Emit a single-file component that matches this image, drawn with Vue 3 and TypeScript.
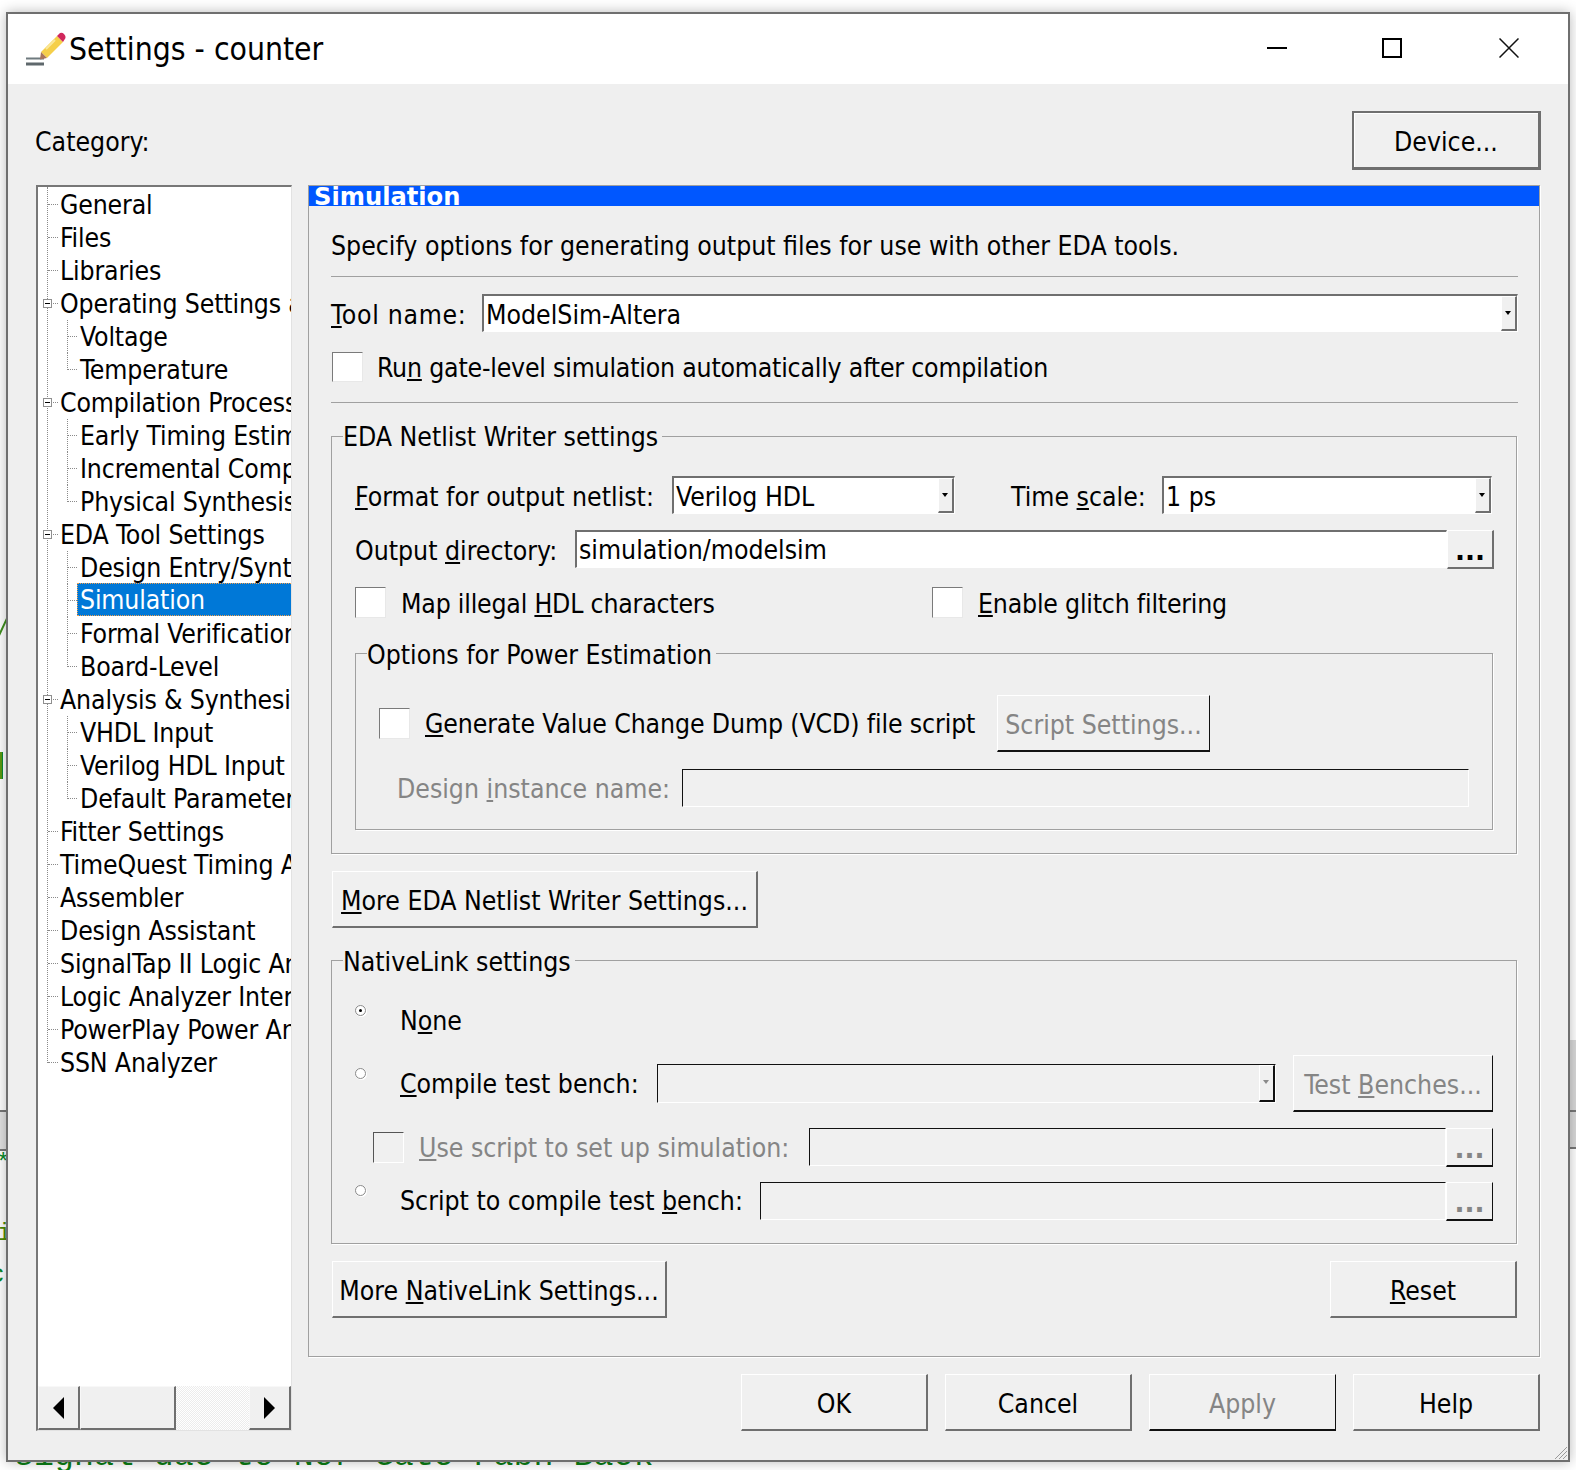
<script setup lang="ts">
interface TreeRow { label: string; level: number; expander?: boolean; last?: boolean; selected?: boolean }
const rows: TreeRow[] = [
  { label: 'General', level: 0 },
  { label: 'Files', level: 0 },
  { label: 'Libraries', level: 0 },
  { label: 'Operating Settings and Conditions', level: 0, expander: true },
  { label: 'Voltage', level: 1 },
  { label: 'Temperature', level: 1, last: true },
  { label: 'Compilation Process Settings', level: 0, expander: true },
  { label: 'Early Timing Estimate', level: 1 },
  { label: 'Incremental Compilation', level: 1 },
  { label: 'Physical Synthesis Optimizations', level: 1, last: true },
  { label: 'EDA Tool Settings', level: 0, expander: true },
  { label: 'Design Entry/Synthesis', level: 1 },
  { label: 'Simulation', level: 1, selected: true },
  { label: 'Formal Verification', level: 1 },
  { label: 'Board-Level', level: 1, last: true },
  { label: 'Analysis & Synthesis Settings', level: 0, expander: true },
  { label: 'VHDL Input', level: 1 },
  { label: 'Verilog HDL Input', level: 1 },
  { label: 'Default Parameters', level: 1, last: true },
  { label: 'Fitter Settings', level: 0 },
  { label: 'TimeQuest Timing Analyzer', level: 0 },
  { label: 'Assembler', level: 0 },
  { label: 'Design Assistant', level: 0 },
  { label: 'SignalTap II Logic Analyzer', level: 0 },
  { label: 'Logic Analyzer Interface', level: 0 },
  { label: 'PowerPlay Power Analyzer Settings', level: 0 },
  { label: 'SSN Analyzer', level: 0 },
]
const footer = [
  { label: 'OK', disabled: false },
  { label: 'Cancel', disabled: false },
  { label: 'Apply', disabled: true },
  { label: 'Help', disabled: false },
]
</script>

<template>
  <div class="desk">
    <span class="bd bd-band-l"></span>
    <span class="bd bd-band-r"></span>
    <span class="bd bd-slash"></span>
    <span class="bd bd-green"></span>
    <span class="bd bd-star">*</span>
    <span class="bd bd-i">i</span>
    <span class="bd bd-c">c</span>
    <span class="bd bd-code">signal dac to Nor Gate Fabn Back</span>

    <div class="window">
      <header class="titlebar">
        <svg class="appicon" width="40" height="36" viewBox="0 0 40 36">
          <rect x="0" y="25.5" width="18" height="2" fill="#6f7a7e" />
          <rect x="0" y="30.5" width="18" height="3" fill="#5f686c" />
          <path d="M15 20 L31 4 L37 10 L21 26 Z" fill="#f5cf4a" />
          <path d="M31 4 L34 1 Q36 0 38 2 Q40 4 39.5 6 L37 10 Z" fill="#d0275c" />
          <path d="M15 20 L21 26 L14 27.5 Z" fill="#a9745a" />
          <path d="M20 17 L29 8" stroke="#fbe89a" stroke-width="2" />
        </svg>
        <span class="title">Settings - counter</span>
        <span class="grow"></span>
        <svg class="wbtn w-min" width="20" height="20" viewBox="0 0 20 20"><rect x="0" y="9" width="20" height="2" fill="#000" /></svg>
        <svg class="wbtn w-max" width="20" height="20" viewBox="0 0 20 20"><rect x="1" y="1" width="18" height="18" fill="none" stroke="#000" stroke-width="2" /></svg>
        <svg class="wbtn w-close" width="20" height="20" viewBox="0 0 20 20"><path d="M0.5 0.5 L19.5 19.5 M19.5 0.5 L0.5 19.5" stroke="#111" stroke-width="1.5" /></svg>
      </header>

      <div class="body">
        <div class="toprow">
          <span>Category:</span>
          <button class="btn device">Device...</button>
        </div>

        <div class="main">
          <div class="tree">
            <div class="list">
              <span class="rootline"></span>
              <div
                v-for="r in rows"
                :key="r.label"
                class="trow"
                :class="[r.level ? 'child' : 'root', { last: r.last, sel: r.selected }]"
              >
                <span class="hline"></span>
                <span v-if="r.level" class="vline"></span>
                <span v-if="r.expander" class="exp"><i></i></span>
                <span class="tlabel">{{ r.label }}</span>
              </div>
            </div>
            <div class="hscroll">
              <div class="sb-btn"><svg width="12" height="22" viewBox="0 0 12 22"><path d="M11 0 V22 L0 11 Z" fill="#000" /></svg></div>
              <div class="sb-thumb"></div>
              <div class="sb-track"></div>
              <div class="sb-btn"><svg width="12" height="22" viewBox="0 0 12 22"><path d="M0 0 V22 L11 11 Z" fill="#000" /></svg></div>
            </div>
          </div>

          <div class="rightcol">
            <section class="panel">
              <div class="phead">Simulation</div>
              <div class="pbody">
                <div class="desc">Specify options for generating output files for use with other EDA tools.</div>
                <div class="divider d1"></div>
                <div class="row tool">
                  <label class="l-tool"><u>T</u>ool name:</label>
                  <div class="combo fill"><span>ModelSim-Altera</span><b class="arrow"><i></i></b></div>
                </div>
                <div class="row run">
                  <span class="check"></span>
                  <label class="cl l-run">Ru<u>n</u> gate-level simulation automatically after compilation</label>
                </div>
                <div class="divider d2"></div>

                <div class="group g-eda">
                  <span class="legend">EDA Netlist Writer settings</span>
                  <div class="row fmt">
                    <label class="l-fmt"><u>F</u>ormat for output netlist:</label>
                    <div class="combo c-fmt"><span>Verilog HDL</span><b class="arrow"><i></i></b></div>
                    <label class="l-time">Time <u>s</u>cale:</label>
                    <div class="combo c-time"><span>1 ps</span><b class="arrow"><i></i></b></div>
                  </div>
                  <div class="row out">
                    <label class="l-out">Output <u>d</u>irectory:</label>
                    <div class="input i-out"><span>simulation/modelsim</span></div>
                    <button class="btn dots"><span>...</span></button>
                  </div>
                  <div class="row opts">
                    <div class="opt1"><span class="check"></span><label class="cl">Map illegal <u>H</u>DL characters</label></div>
                    <span class="check"></span><label class="cl"><u>E</u>nable glitch filtering</label>
                  </div>
                  <div class="group g-power">
                    <span class="legend">Options for Power Estimation</span>
                    <div class="row vcd">
                      <span class="check"></span>
                      <label class="cl l-vcd"><u>G</u>enerate Value Change Dump (VCD) file script</label>
                      <button class="btn dis b-script">Script Settings...</button>
                    </div>
                    <div class="row inst">
                      <label class="l-inst off">Design <u>i</u>nstance name:</label>
                      <div class="input off i-inst"></div>
                    </div>
                  </div>
                </div>

                <button class="btn b-more"><u>M</u>ore EDA Netlist Writer Settings...</button>

                <div class="group g-native">
                  <span class="legend">NativeLink settings</span>
                  <div class="row none">
                    <span class="radio on"></span>
                    <label>N<u>o</u>ne</label>
                  </div>
                  <div class="row compile">
                    <span class="radio r2"></span>
                    <label class="l-compile"><u>C</u>ompile test bench:</label>
                    <div class="combo off c-tb"><b class="arrow"><i></i></b></div>
                    <button class="btn dis b-tb">Test <u>B</u>enches...</button>
                  </div>
                  <div class="row usescript">
                    <span class="check off"></span>
                    <label class="cl off l-use"><u>U</u>se script to set up simulation:</label>
                    <div class="input off fill"></div>
                    <button class="btn dis dots"><span>...</span></button>
                  </div>
                  <div class="row scriptc">
                    <span class="radio"></span>
                    <label class="l-sc">Script to compile test <u>b</u>ench:</label>
                    <div class="input off fill"></div>
                    <button class="btn dis dots"><span>...</span></button>
                  </div>
                </div>

                <div class="row bottom">
                  <button class="btn b-nl">More <u>N</u>ativeLink Settings...</button>
                  <button class="btn b-reset"><u>R</u>eset</button>
                </div>
              </div>
            </section>
            <footer class="footer">
              <button v-for="f in footer" :key="f.label" class="btn fbtn" :class="{ dis: f.disabled }">{{ f.label }}</button>
            </footer>
          </div>
        </div>
      </div>
      <svg class="grip" width="14" height="14" viewBox="0 0 14 14"><path d="M1 13 L13 1 M5 13 L13 5 M9 13 L13 9" stroke="#9a9a9a" stroke-width="1" /></svg>
    </div>
  </div>
</template>

<style>
html, body { margin: 0; background: #fff; }
</style>

<style scoped>
.desk {
  position: relative;
  width: 1576px;
  height: 1470px;
  overflow: hidden;
  background: #fff;
  padding: 12px 0 0 6px;
  box-sizing: border-box;
  font-family: "DejaVu Sans", "Noto Sans", sans-serif;
  font-stretch: condensed;
  font-size: 26.4px;
  color: #000;
}
.bd { position: absolute; display: block; }
.bd-band-l { left: 0; top: 1110px; width: 6px; height: 37px; background: #e2e2e2; border-top: 2px solid #777; border-bottom: 2px solid #777; }
.bd-band-r { left: 1570px; top: 1040px; width: 6px; height: 107px; background: #d9d9d9; border-bottom: 2px solid #777; }
.bd-band-r::after { content: ""; position: absolute; left: 0; right: 0; top: 70px; height: 2px; background: #777; }
.bd-slash { left: 2px; top: 617px; width: 2px; height: 20px; background: #3f8f1e; transform: rotate(25deg); }
.bd-green { left: 0; top: 752px; width: 2px; height: 27px; background: #5b9a10; border-right: 1px solid #0a8a3a; }
.bd-star { left: -4px; top: 1152px; color: #0a8a2a; font: 24px/24px "Liberation Mono", monospace; }
.bd-i { left: -3px; top: 1222px; color: #4f8a00; font: 24px/24px "Liberation Mono", monospace; }
.bd-c { left: -11px; top: 1262px; color: #0a8a2a; font: 26px/26px "Liberation Mono", monospace; }
.bd-code { left: 14px; top: 1437px; color: #0a7d14; font: 33.3px/38px "Liberation Mono", monospace; white-space: pre; }

.window {
  position: relative;
  width: 1564px;
  height: 1450px;
  box-sizing: border-box;
  border: 2px solid #6f6f6f;
  background: #efefef;
  box-shadow: 0 0 12px rgba(0, 0, 0, 0.28);
  display: flex;
  flex-direction: column;
}
.titlebar {
  height: 70px;
  background: #fff;
  display: flex;
  align-items: center;
  flex: none;
}
.appicon { margin-left: 18px; margin-top: 2px; flex: none; filter: blur(0.4px); }
.title { margin-left: 3px; font-size: 31.6px; }
.grow { flex: 1; }
.wbtn { flex: none; position: relative; top: -1px; }
.w-max { margin-left: 95px; }
.w-close { margin-left: 97px; margin-right: 49px; }

.body { padding: 27px 28px 0; flex: 1; }
.toprow { display: flex; justify-content: space-between; align-items: center; height: 59px; margin-bottom: -1px; margin-right: -1px; }
.toprow > span { margin-top: 1px; margin-left: -1px; }
.main { display: flex; gap: 16px; margin-top: 16px; }

.btn {
  font: inherit;
  font-stretch: inherit;
  color: #000;
  padding: 2px 0 0;
  margin: 0;
  background: #f0f0f0;
  box-sizing: border-box;
  border-style: solid;
  border-width: 1px 2px 2px 1px;
  border-color: #fff #6f6f6f #6f6f6f #fff;
  display: block;
  text-align: center;
  white-space: nowrap;
}
.btn.dis { color: #858585; border-color: #fff #111 #111 #fff; border-width: 1px 1px 2px 1px; }
.device { width: 189px; height: 59px; padding-top: 3px; border: 2px solid #6f6f6f; border-right-width: 3px; border-bottom-width: 3px; box-shadow: inset 1px 1px 0 #fff; }

.tree {
  width: 256px;
  height: 1246px;
  box-sizing: border-box;
  background: #fff;
  border-style: solid;
  border-width: 2px 1px 1px 2px;
  border-color: #777 #e2e2e2 #e2e2e2 #777;
  display: flex;
  flex-direction: column;
  flex: none;
}
.list { position: relative; flex: 1; padding-top: 1px; overflow: hidden; letter-spacing: -0.15px; }
.rootline { position: absolute; left: 9px; top: 0; height: 876px; border-left: 1px dotted #8a8a8a; }
.trow { position: relative; height: 33px; line-height: 33px; white-space: nowrap; }
.root .tlabel { position: absolute; left: 22px; }
.child .tlabel { position: absolute; left: 42px; }
.hline { position: absolute; top: 16px; border-top: 1px dotted #8a8a8a; }
.root .hline { left: 10px; width: 10px; }
.child .hline { left: 30px; width: 9px; }
.vline { position: absolute; left: 29px; top: 0; height: 33px; border-left: 1px dotted #8a8a8a; }
.last .vline { height: 17px; }
.exp {
  position: absolute;
  left: 5px;
  top: 12px;
  width: 9px;
  height: 9px;
  box-sizing: border-box;
  border: 1px solid #8f8f8f;
  background: #fff;
}
.exp i { position: absolute; left: 1px; top: 3px; width: 5px; height: 1px; background: #000; }
.sel .tlabel {
  left: 39px;
  top: -1px;
  width: 216px;
  height: 33px;
  box-sizing: border-box;
  padding-left: 3px;
  background: #0078d7;
  color: #fff;
  outline: 1px dotted #f0a050;
  outline-offset: -1px;
}
.hscroll { display: flex; height: 44px; flex: none; }
.sb-btn, .sb-thumb {
  box-sizing: border-box;
  background: #f0f0f0;
  border-style: solid;
  border-width: 1px 2px 2px 1px;
  border-color: #f8f8f8 #6f6f6f #6f6f6f #f8f8f8;
  display: flex;
  align-items: center;
  justify-content: center;
}
.sb-btn { width: 42px; flex: none; }
.sb-thumb { width: 96px; flex: none; }
.sb-track {
  flex: 1;
  background: repeating-conic-gradient(#ececec 0% 25%, #fff 0% 50%) 0 0 / 2px 2px;
}

.rightcol { width: 1232px; flex: none; }
.panel {
  height: 1172px;
  box-sizing: border-box;
  border: 1px solid #a0a0a0;
  box-shadow: 1px 1px 0 #fff;
}
.phead {
  height: 20px;
  line-height: 22px;
  overflow: hidden;
  background: #0057ff;
  color: #fff;
  font-weight: 700;
  font-stretch: normal;
  padding-left: 5px;
  font-size: 24.2px;
}
.pbody { padding: 0 21px 0 22px; }
.desc { height: 40px; line-height: 40px; margin-top: 20px; white-space: nowrap; }
.divider { height: 1px; background: #a0a0a0; }
.d1 { margin-top: 10px; }
.d2 { margin-top: 20px; }
.row { display: flex; align-items: center; white-space: nowrap; }
label { display: block; flex: none; }
.off, .off span { color: #858585; }
.fill { flex: 1; min-width: 0; }

.combo, .input {
  position: relative;
  box-sizing: border-box;
  height: 38px;
  background: #fff;
  border-style: solid;
  border-width: 2px 1px 1px 2px;
  border-color: #6f6f6f #fff #fff #6f6f6f;
  line-height: 36px;
  padding-left: 2px;
  flex: none;
}
.combo { line-height: 38px; }
.input.fill { flex: 1; }
.combo.fill { flex: 1; }
.input.off, .combo.off { background: #f0f0f0; border-color: #111 #fff #fff #111; border-width: 1px; }
.arrow {
  position: absolute;
  right: 0;
  top: 0;
  bottom: 0;
  width: 16px;
  box-sizing: border-box;
  background: #f0f0f0;
  border-style: solid;
  border-width: 1px 2px 2px 1px;
  border-color: #fff #6f6f6f #6f6f6f #fff;
}
.arrow i {
  position: absolute;
  left: 3px;
  top: 14px;
  width: 0;
  height: 0;
  border-style: solid;
  border-width: 4px 3px 0;
  border-color: #000 transparent transparent;
}
.off .arrow { border-color: #fff #111 #111 #fff; }
.off .arrow i { border-top-color: #8a8a8a; }

.check {
  width: 31px;
  height: 31px;
  flex: none;
  box-sizing: border-box;
  background: #fff;
  border-style: solid;
  border-width: 1px;
  border-color: #7a7a7a #e8e8e8 #e8e8e8 #7a7a7a;
  display: block;
}
.check.off { background: #f0f0f0; border-color: #555 #fff #fff #555; }
.cl { margin-left: 15px; }

.tool { height: 38px; margin-top: 17px; }
.tool label { padding-top: 2px; }
.l-tool { width: 151px; letter-spacing: 0.7px; }
.run { height: 30px; margin-top: 20px; padding-left: 1px; }
.run .check { height: 30px; }
.run .cl { margin-left: 14px; }
.l-run { letter-spacing: -0.2px; }

.group { position: relative; border: 1px solid #a0a0a0; box-shadow: 1px 1px 0 #fff; box-sizing: border-box; }
.legend { position: absolute; left: 11px; top: -19px; height: 36px; line-height: 36px; padding: 0 4px 0 0; background: #efefef; white-space: nowrap; }
.g-eda { height: 418px; margin-top: 33px; padding-left: 23px; width: 1186px; }
.g-eda > .legend { top: -18px; }
.fmt { margin-top: 39px; height: 38px; }
.fmt label { padding-top: 2px; }
.l-fmt { width: 317px; }
.c-fmt { width: 283px; }
.l-time { margin-left: 56px; width: 151px; }
.c-time { width: 330px; }
.out { margin-top: 16px; height: 39px; }
.out label { padding-top: 1px; }
.out .input { align-self: flex-start; }
.l-out { width: 220px; }
.i-out { width: 872px; }
.dots { width: 47px; height: 39px; line-height: 1; flex: none; font-weight: 700; font-stretch: normal; position: relative; }
.dots span { position: absolute; left: 0; right: 0; top: 7px; line-height: 26px; }
.opts { margin-top: 18px; height: 31px; }
.opts label { padding-top: 2px; letter-spacing: -0.2px; }
.opt1 { width: 577px; display: flex; align-items: center; flex: none; }
.g-power { margin-top: 35px; width: 1138px; height: 177px; padding-left: 23px; }
.g-power > .legend { left: 11px; top: -17px; }
.vcd { margin-top: 41px; height: 57px; }
.l-vcd { width: 572px; letter-spacing: -0.12px; }
.b-script { width: 213px; height: 57px; }
.inst { margin-top: 17px; height: 38px; padding-left: 18px; }
.l-inst { width: 285px; margin-left: 0; }
.i-inst { width: 787px; height: 38px; }
.b-more { width: 426px; height: 57px; margin: 17px 0 0 1px; }

.g-native { height: 284px; margin-top: 32px; padding: 0 23px; width: 1186px; }
.g-native > .legend { top: -17px; }
.none { margin-top: 41px; height: 38px; }
.radio {
  width: 11px;
  height: 11px;
  box-sizing: border-box;
  border: 1px solid #8a8a8a;
  border-radius: 50%;
  background: #fff;
  box-shadow: 1px 1px 0 #fff;
  flex: none;
  align-self: flex-start;
  margin-top: 3px;
  position: relative;
  display: block;
}
.radio.on::after { content: ""; position: absolute; left: 3px; top: 3px; width: 3px; height: 3px; border-radius: 50%; background: #000; }
.none label { margin-left: 34px; margin-top: -2px; }
.compile { margin-top: 15px; height: 57px; margin-bottom: -1px; }
.r2 { margin-top: 13px; }
.l-compile { margin-left: 34px; width: 257px; }
.c-tb { width: 619px; height: 39px; }
.b-tb { margin-left: 17px; width: 200px; height: 57px; }
.usescript { margin-top: 17px; height: 39px; padding-left: 18px; }
.usescript .cl { margin-left: 15px; }
.l-use { width: 390px; }
.usescript .input { align-self: flex-start; }
.scriptc { margin-top: 15px; height: 39px; }
.l-sc { margin-left: 34px; width: 360px; margin-top: -2px; }
.scriptc .input { align-self: flex-start; }
.bottom { margin-top: 17px; height: 57px; justify-content: space-between; padding: 0 1px; }
.b-nl { width: 335px; height: 57px; }
.b-reset { width: 187px; height: 57px; }

.footer { display: flex; justify-content: flex-end; gap: 17px; margin-top: 17px; }
.fbtn { width: 187px; height: 57px; }
.grip { position: absolute; right: 0; bottom: 0; }
</style>
